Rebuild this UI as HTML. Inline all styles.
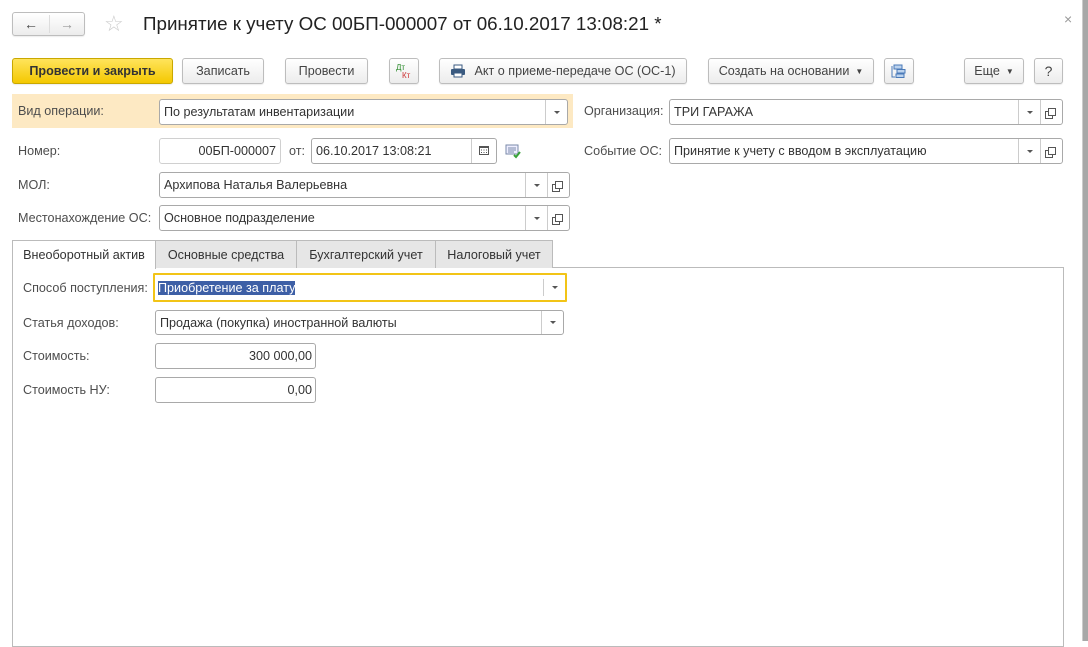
<!DOCTYPE html>
<html><head><meta charset="utf-8">
<style>
*{box-sizing:border-box;margin:0;padding:0}
body{width:1088px;height:641px;background:#fff;font-family:"Liberation Sans",Arial,sans-serif;font-size:12.6px;color:#333;position:relative;overflow:hidden}
.a{position:absolute}
.btn{position:absolute;height:26px;border:1px solid #bdbdbd;border-radius:3px;background:linear-gradient(#fff,#ececec);display:flex;align-items:center;justify-content:center;color:#444;box-shadow:0 1px 1px rgba(0,0,0,.08)}
.fld{position:absolute;height:26px;border:1px solid #a9a9a9;border-radius:3px;background:#fff;padding-left:4px;display:flex;align-items:center;color:#333;white-space:nowrap}
.dd{position:absolute;top:0;bottom:0;width:22px;border-left:1px solid #ccc;display:flex;align-items:center;justify-content:center}
.dd:after{content:"";border-left:3px solid transparent;border-right:3px solid transparent;border-top:3px solid #555}
.op{position:absolute;top:0;bottom:0;width:22px;border-left:1px solid #ccc;display:flex;align-items:center;justify-content:center}
.op:after{content:"";width:6px;height:6px;border:1px solid #555;box-shadow:-3px 3px 0 -1px #fff,-3px 3px 0 0 #555}
.sep{position:absolute;top:0;bottom:0;border-left:1px solid #ccc}
.lbl{position:absolute;color:#4d4d4d;white-space:nowrap}
.tab{position:absolute;top:240px;height:28px;border:1px solid #bbb;border-bottom:none;background:#e6e6e6;display:flex;align-items:center;justify-content:center;color:#333}
</style></head><body>
<div class="btn" style="left:12px;top:12px;width:73px;height:24px"><span style="position:absolute;left:11px;font-size:14px;color:#444">&#8592;</span><span style="position:absolute;left:36px;top:2px;bottom:2px;border-left:1px solid #ddd"></span><span style="position:absolute;left:47px;font-size:14px;color:#999">&#8594;</span></div>
<div class="a" style="left:104px;top:11px;font-size:22px;color:#ccc">&#9734;</div>
<div class="a" style="left:143px;top:13px;font-size:18.8px;color:#222">Принятие к учету ОС 00БП-000007 от 06.10.2017 13:08:21 *</div>
<div class="a" style="left:1064px;top:11px;font-size:14px;color:#999">×</div>

<div class="btn" style="left:12px;top:58px;width:161px;background:linear-gradient(#ffe45c,#f4c800);border-color:#c9a800;color:#333;font-weight:bold">Провести и закрыть</div>
<div class="btn" style="left:182px;top:58px;width:82px">Записать</div>
<div class="btn" style="left:285px;top:58px;width:83px">Провести</div>
<div class="btn" style="left:389px;top:58px;width:30px"><span style="position:absolute;left:6px;top:4px;font-size:8px;color:#2a8a2a">Дт</span><span style="position:absolute;left:12px;top:12px;font-size:8px;color:#c33">Кт</span></div>
<div class="btn" style="left:439px;top:58px;width:248px"><svg width="16" height="14" viewBox="0 0 16 14" style="margin-right:8px"><rect x="4" y="1" width="8" height="4" fill="#fff" stroke="#3a5a80"/><rect x="1" y="5" width="14" height="6" rx="1" fill="#3a5a80"/><rect x="4" y="9" width="8" height="4" fill="#fff" stroke="#3a5a80"/></svg>Акт о приеме-передаче ОС (ОС-1)</div>
<div class="btn" style="left:708px;top:58px;width:166px">Создать на основании <span style="font-size:8px;margin-left:6px">&#9660;</span></div>
<div class="btn" style="left:884px;top:58px;width:30px"><svg width="16" height="16" viewBox="0 0 16 16"><rect x="3" y="2" width="8" height="4" fill="#bcd3ee" stroke="#4a7ab8"/><rect x="6" y="6.5" width="8" height="3.5" fill="#bcd3ee" stroke="#4a7ab8"/><rect x="5" y="11" width="8" height="3.5" fill="#bcd3ee" stroke="#4a7ab8"/><path d="M1 3v11h3" fill="none" stroke="#4a7ab8"/></svg></div>
<div class="btn" style="left:964px;top:58px;width:60px">Еще <span style="font-size:8px;margin-left:6px">&#9660;</span></div>
<div class="btn" style="left:1034px;top:58px;width:29px;font-size:14px">?</div>

<div class="a" style="left:12px;top:94px;width:561px;height:34px;background:#fde9c3"></div>
<div class="lbl" style="left:18px;top:104px">Вид операции:</div>
<div class="fld" style="left:159px;top:99px;width:409px">По результатам инвентаризации<div class="dd" style="right:0"></div></div>
<div class="lbl" style="left:584px;top:104px">Организация:</div>
<div class="fld" style="left:669px;top:99px;width:394px">ТРИ ГАРАЖА<div class="dd" style="right:22px"></div><div class="op" style="right:0"></div></div>

<div class="lbl" style="left:18px;top:144px">Номер:</div>
<div class="fld" style="left:159px;top:138px;width:122px;justify-content:flex-end;padding-right:4px;border-color:#d0d0d0">00БП-000007</div>
<div class="lbl" style="left:289px;top:144px">от:</div>
<div class="fld" style="left:311px;top:138px;width:186px">06.10.2017 13:08:21<div class="sep" style="right:24px"></div></div>
<svg class="a" style="left:478px;top:144px" width="12" height="12" viewBox="0 0 12 12"><rect x="1.5" y="2.5" width="9" height="8" fill="none" stroke="#555"/><rect x="1" y="2" width="10" height="2" fill="#555"/><path d="M3 6h1M5.5 6h1M8 6h1M3 8.5h1M5.5 8.5h1M8 8.5h1" stroke="#555"/></svg>
<svg class="a" style="left:505px;top:144px" width="17" height="15" viewBox="0 0 17 15"><rect x="1" y="1" width="12" height="9" fill="#eef" stroke="#7a8aa8"/><path d="M3 4h8M3 6h8M3 8h6" stroke="#7a8aa8"/><path d="M9 11l2 2 4-5" stroke="#3aa23a" stroke-width="2" fill="none"/></svg>
<div class="lbl" style="left:584px;top:144px">Событие ОС:</div>
<div class="fld" style="left:669px;top:138px;width:394px">Принятие к учету с вводом в эксплуатацию<div class="dd" style="right:22px"></div><div class="op" style="right:0"></div></div>

<div class="lbl" style="left:18px;top:178px">МОЛ:</div>
<div class="fld" style="left:159px;top:172px;width:411px">Архипова Наталья Валерьевна<div class="dd" style="right:22px"></div><div class="op" style="right:0"></div></div>
<div class="lbl" style="left:18px;top:211px">Местонахождение ОС:</div>
<div class="fld" style="left:159px;top:205px;width:411px">Основное подразделение<div class="dd" style="right:22px"></div><div class="op" style="right:0"></div></div>

<div class="a" style="left:12px;top:267px;width:1052px;height:380px;border:1px solid #bbb"></div>
<div class="tab" style="left:12px;width:144px;background:#fff;height:29px;z-index:2">Внеоборотный актив</div>
<div class="tab" style="left:155px;width:142px">Основные средства</div>
<div class="tab" style="left:296px;width:140px">Бухгалтерский учет</div>
<div class="tab" style="left:435px;width:118px">Налоговый учет</div>

<div class="lbl" style="left:23px;top:281px">Способ поступления:</div>
<div class="fld" style="left:153px;top:273px;width:414px;height:29px;border:2px solid #f2c417;border-radius:1px;padding-left:3px"><span style="background:#3d5fa6;color:#fff">Приобретение за плату</span><div class="dd" style="right:0;top:4px;bottom:4px"></div></div>
<div class="lbl" style="left:23px;top:316px">Статья доходов:</div>
<div class="fld" style="left:155px;top:310px;width:409px;height:25px">Продажа (покупка) иностранной валюты<div class="dd" style="right:0"></div></div>
<div class="lbl" style="left:23px;top:349px">Стоимость:</div>
<div class="fld" style="left:155px;top:343px;width:161px;justify-content:flex-end;padding-right:3px">300 000,00</div>
<div class="lbl" style="left:23px;top:383px">Стоимость НУ:</div>
<div class="fld" style="left:155px;top:377px;width:161px;justify-content:flex-end;padding-right:3px">0,00</div>

<div class="a" style="left:1082px;top:0;width:6px;height:641px;background:#a8a8a8;border-left:1px solid #ccc"></div>
</body></html>
